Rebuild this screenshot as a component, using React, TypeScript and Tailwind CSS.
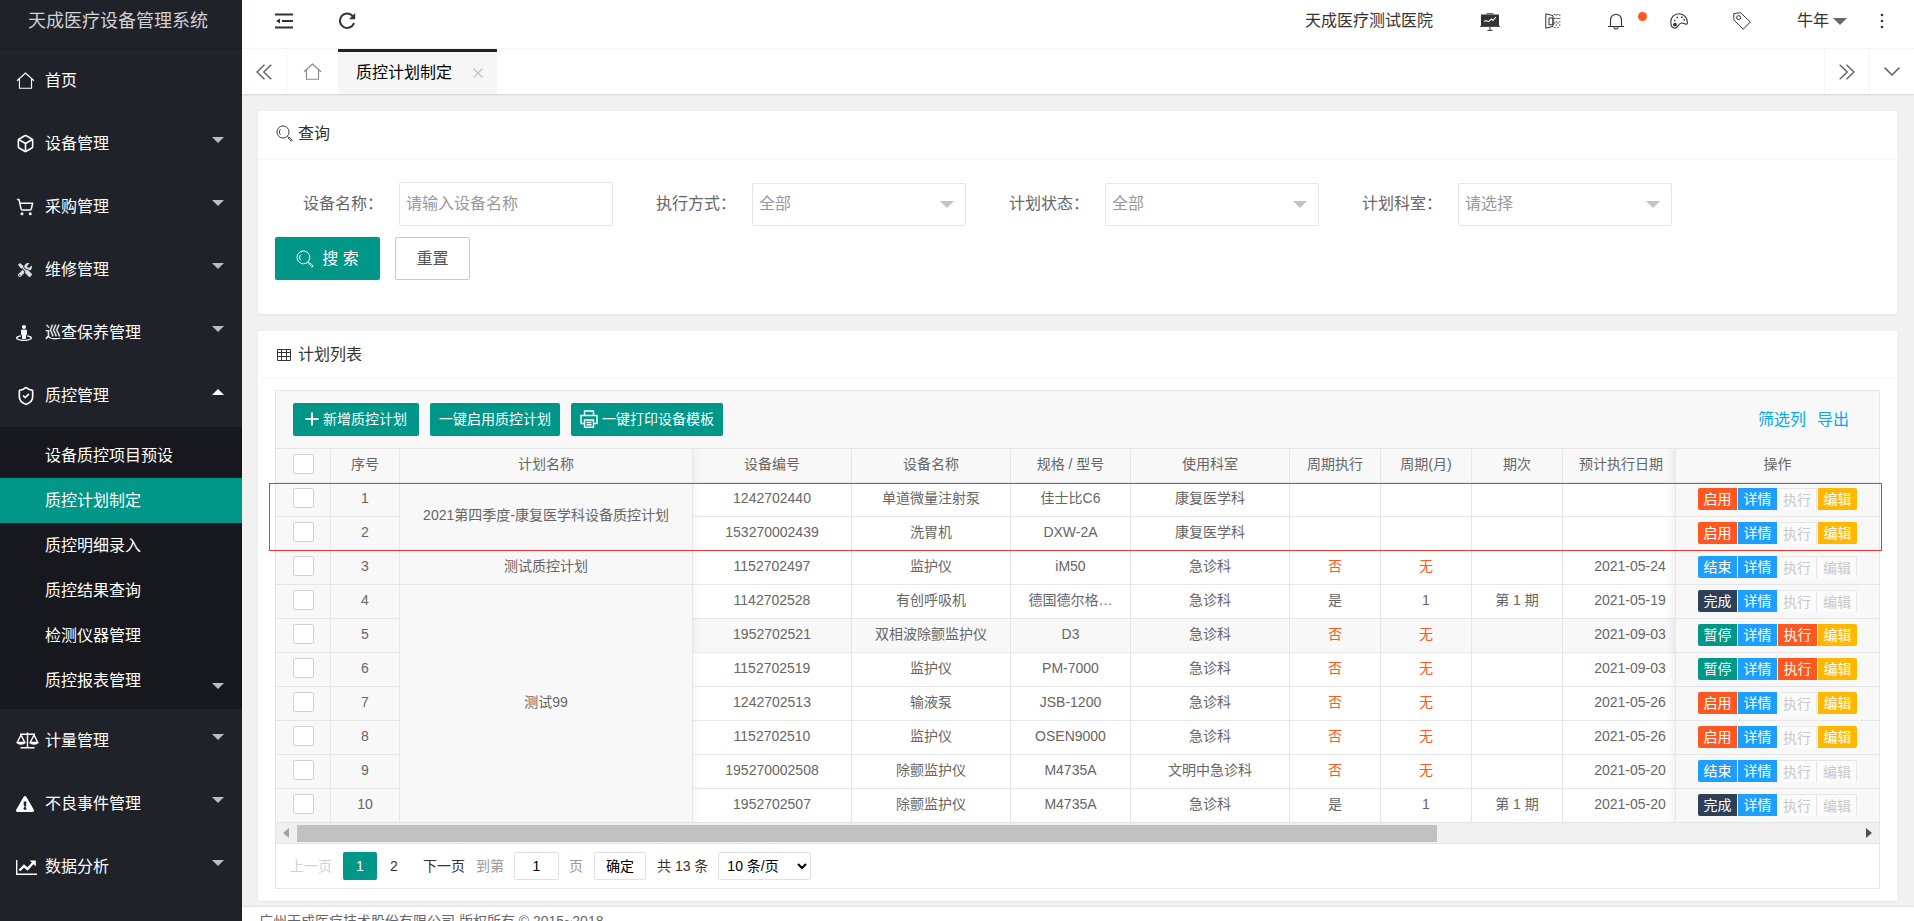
import { useState, type ReactNode } from 'react'
import { Box, ShieldCheck, ShoppingCart } from 'lucide-react'
import { FaExclamationTriangle, FaStreetView, FaTools } from 'react-icons/fa'

interface MenuItem {
  title: string
  icon: ReactNode
  children?: string[]
  leaf?: boolean
}

interface PlanRow {
  plan?: string
  span?: number
  code: string
  device: string
  model: string
  dept: string
  cycle: string
  months: string
  period: string
  date: string
  state: '启用' | '结束' | '完成' | '暂停'
}

const rows: PlanRow[] = [
  { plan: '2021第四季度-康复医学科设备质控计划', span: 2, code: '1242702440', device: '单道微量注射泵', model: '佳士比C6', dept: '康复医学科', cycle: '', months: '', period: '', date: '', state: '启用' },
  { code: '153270002439', device: '洗胃机', model: 'DXW-2A', dept: '康复医学科', cycle: '', months: '', period: '', date: '', state: '启用' },
  { plan: '测试质控计划', span: 1, code: '1152702497', device: '监护仪', model: 'iM50', dept: '急诊科', cycle: '否', months: '无', period: '', date: '2021-05-24', state: '结束' },
  { plan: '测试99', span: 7, code: '1142702528', device: '有创呼吸机', model: '德国德尔格…', dept: '急诊科', cycle: '是', months: '1', period: '第 1 期', date: '2021-05-19', state: '完成' },
  { code: '1952702521', device: '双相波除颤监护仪', model: 'D3', dept: '急诊科', cycle: '否', months: '无', period: '', date: '2021-09-03', state: '暂停' },
  { code: '1152702519', device: '监护仪', model: 'PM-7000', dept: '急诊科', cycle: '否', months: '无', period: '', date: '2021-09-03', state: '暂停' },
  { code: '1242702513', device: '输液泵', model: 'JSB-1200', dept: '急诊科', cycle: '否', months: '无', period: '', date: '2021-05-26', state: '启用' },
  { code: '1152702510', device: '监护仪', model: 'OSEN9000', dept: '急诊科', cycle: '否', months: '无', period: '', date: '2021-05-26', state: '启用' },
  { code: '195270002508', device: '除颤监护仪', model: 'M4735A', dept: '文明中急诊科', cycle: '否', months: '无', period: '', date: '2021-05-20', state: '结束' },
  { code: '1952702507', device: '除颤监护仪', model: 'M4735A', dept: '急诊科', cycle: '是', months: '1', period: '第 1 期', date: '2021-05-20', state: '完成' },
]

const HOVER_ROW = 4

const stateColors = {
  启用: 'bg-[#ff5722]',
  结束: 'bg-[#1e9fff]',
  完成: 'bg-[#2f4056]',
  暂停: 'bg-[#009688]',
}

const HomeIcon = ({ className = '' }: { className?: string }) => (
  <svg viewBox="0 0 20 18" className={className} fill="none" stroke="currentColor" strokeWidth="1.2">
    <path d="M1 9.3 10 1.2l9 8.1M3.6 7.2v10h12.8v-10" />
  </svg>
)

const SearchIcon = ({ className = '' }: { className?: string }) => (
  <svg viewBox="0 0 18 18" className={className} fill="none" stroke="currentColor" strokeWidth="1">
    <circle cx="7.4" cy="7.4" r="6.4" />
    <path d="M4.6 10.2c-1.3-1.6-1.3-4 0-5.6" />
    <path d="m12 12 1.4 1.2m-.6.6 1-1 3.4 3.2-1 1.1z" />
  </svg>
)

const ScaleIcon = () => (
  <svg viewBox="0 0 23 17" className="w-[23px] h-[17px]" fill="none" stroke="currentColor" strokeWidth="1.4">
    <path d="M4 2.2h15M11.5.5v14.500M4.500 15.800h14" />
    <path d="M5 3 1.200 10.500h7.600zM18 3l-3.800 7.500h7.600z" />
    <path d="M.8 10.500c.6 3 7.800 3 8.400 0zM13.800 10.500c.6 3 7.800 3 8.400 0z" fill="currentColor" stroke="none" />
  </svg>
)

const ChartIcon = () => (
  <svg viewBox="0 0 21 16" className="w-[21px] h-4" fill="none" stroke="currentColor">
    <path d="M.7 1v14.200H21" strokeWidth="1.400" />
    <path d="m3.500 11.500 4.500-4.500 3.500 3 5.500-6" strokeWidth="2.400" />
    <path d="M13.800 1.500h6v6z" fill="currentColor" stroke="none" />
  </svg>
)

const Triangle = ({ className = '' }: { className?: string }) => (
  <svg viewBox="0 0 14 7" className={className} fill="currentColor">
    <path d="M0 0h14L7 7z" />
  </svg>
)

const menu: MenuItem[] = [
  { title: '首页', icon: <HomeIcon className="w-[19px] h-[17px]" />, leaf: true },
  { title: '设备管理', icon: <Box size={19} strokeWidth={2} /> },
  { title: '采购管理', icon: <ShoppingCart size={18} strokeWidth={2} /> },
  { title: '维修管理', icon: <FaTools size={14} className="ml-[2px] text-[#dddddf]" /> },
  { title: '巡查保养管理', icon: <FaStreetView size={16} /> },
  {
    title: '质控管理',
    icon: <ShieldCheck size={20} strokeWidth={2} />,
    children: ['设备质控项目预设', '质控计划制定', '质控明细录入', '质控结果查询', '检测仪器管理', '质控报表管理'],
  },
  { title: '计量管理', icon: <ScaleIcon /> },
  { title: '不良事件管理', icon: <FaExclamationTriangle size={18} /> },
  { title: '数据分析', icon: <ChartIcon /> },
]

function Sidebar() {
  const [active, setActive] = useState('质控计划制定')
  return (
    <aside className="w-[242px] shrink-0 bg-[#20222a] text-white overflow-hidden">
      <h1 className="h-[49px] pb-[6px] pr-[6px] flex items-center justify-center text-lg text-[#d2d3d4] border-b border-[#1b1d23] whitespace-nowrap">
        天成医疗设备管理系统
      </h1>
      <nav>
        {menu.map(item => (
          <div key={item.title}>
            <a href="#" className="h-[63px] pl-4 pr-[17px] flex items-center text-base">
              <span className="w-[29px] shrink-0 flex items-center">{item.icon}</span>
              <span className="flex-1">{item.title}</span>
              {!item.leaf && (
                <Triangle className={`w-[14px] h-[6px] mb-2 ${item.children ? 'rotate-180 text-white' : 'text-[#bcbdbf]'}`} />
              )}
            </a>
            {item.children && (
              <div className="py-[6px] bg-[#17181d]">
                {item.children.map((child, i) => (
                  <a
                    key={child}
                    href="#"
                    onClick={() => setActive(child)}
                    className={`h-[45px] pl-[45px] pr-[17px] flex items-center text-base ${child === active ? 'bg-[#009688]' : ''}`}
                  >
                    <span className="flex-1">{child}</span>
                    {i === 5 && <Triangle className="w-[14px] h-[6px] mt-[10px] text-[#bcbdbf]" />}
                  </a>
                ))}
              </div>
            )}
          </div>
        ))}
      </nav>
    </aside>
  )
}

function TopBar() {
  return (
    <header className="h-[49px] shrink-0 pb-[6px] flex items-center bg-white border-b border-[#f6f6f6] text-[#333]">
      <button type="button" aria-label="收起菜单" className="ml-[33px]">
        <svg viewBox="0 0 18 16" className="w-[18px] h-4" fill="none" stroke="currentColor" strokeWidth="2">
          <path d="M0 1.5h18M7 8h11M0 14.5h18" />
          <path d="M5 5.5v5L1 8z" fill="currentColor" stroke="none" />
        </svg>
      </button>
      <button type="button" aria-label="刷新" className="ml-[45px]">
        <svg viewBox="0 0 18 18" className="w-[18px] h-[18px]" fill="none" stroke="currentColor" strokeWidth="2">
          <path d="M15.6 5.5A7.2 7.2 0 1 0 16 11" />
          <path d="M17.2 1v6.2H11z" fill="currentColor" stroke="none" />
        </svg>
      </button>
      <div className="flex-1" />
      <span className="text-base pr-[26px] whitespace-nowrap">天成医疗测试医院</span>
      <button type="button" aria-label="大屏" className="w-[63px] flex justify-center">
        <svg viewBox="0 0 20 18" className="w-5 h-[18px] mt-[2px]" fill="none">
          <path d="M6.5.8h7" stroke="#333" />
          <path d="M1 1.5h18v11.8H1z" fill="#333" />
          <path d="M0 13.3h20M10 13.3v4M7.5 17.4h5" stroke="#333" />
          <path d="m4 8.500 2-1 2.500 1.200 3-2.700 1.500 1.500 3-3.500" stroke="#fff" strokeWidth="1.1" />
        </svg>
      </button>
      <button type="button" aria-label="便签" className="w-[63px] flex justify-center">
        <svg viewBox="0 0 16 16" className="w-4 h-4" fill="none" stroke="currentColor" strokeWidth="1">
          <path d="M.8.8 8 2.6v10.8L.8 15.2zM4 5h4v6.5L4 12z" />
          <path d="M9 1.500h6M9 5.500h6M9 10h6M9 14.500h6M11.200 1.500v13M14.800 1.500v13" strokeDasharray="1.300 2" />
        </svg>
      </button>
      <button type="button" aria-label="消息" className="w-[63px] flex justify-center relative">
        <svg viewBox="0 0 16 17" className="w-4 h-[17px]" fill="none" stroke="currentColor" strokeWidth="1.1">
          <path d="M0 13.5h16M2.5 13.5V7a5.5 5.8 0 0 1 11 0v6.500M5.800 13.800c.4 3 4 3 4.400 0" />
        </svg>
        <span className="absolute right-px -top-[1px] w-[9px] h-[9px] rounded-full bg-[#ff5722]" />
      </button>
      <button type="button" aria-label="主题" className="w-[63px] flex justify-center">
        <svg viewBox="0 0 18 16" className="w-[18px] h-4" fill="none" stroke="currentColor" strokeWidth="1.1">
          <path d="M17.300 10.500C18 5 14 .8 9 .8S.8 4.500.8 9c0 4 2 6.200 4.200 6.200 3 0 3-4.700 6.500-5.200 2.500-.4 5 2.500 5.800.5z" />
          <circle cx="5" cy="11.600" r="1.300" fill="currentColor" />
          <path d="M4 7.500h1.500M6.500 4.500H8M11 4.300h1.500M13.500 7h1.500" strokeWidth="1.600" />
        </svg>
      </button>
      <button type="button" aria-label="标签" className="w-[63px] flex justify-center">
        <svg viewBox="0 0 18 18" className="w-[18px] h-[18px]" fill="none" stroke="currentColor" strokeWidth="1">
          <path d="M.8 1.600 7.500.7 17.300 10l-7.200 7.300L.8 7.800z" />
          <circle cx="5.600" cy="5.600" r="2" />
        </svg>
      </button>
      <button type="button" className="pl-[23px] pr-[3px] flex items-center gap-1 text-base whitespace-nowrap">
        牛年
        <Triangle className="w-[14px] h-[7px] text-[#666]" />
      </button>
      <button type="button" aria-label="更多" className="w-16 flex justify-center">
        <svg viewBox="0 0 4 16" className="w-1 h-4" fill="currentColor">
          <circle cx="2" cy="2" r="1.300" />
          <circle cx="2" cy="8" r="1.300" />
          <circle cx="2" cy="14" r="1.300" />
        </svg>
      </button>
    </header>
  )
}

function TabBar() {
  return (
    <div className="h-[45px] shrink-0 flex bg-white text-[#666] shadow-[0_1px_2px_rgba(0,0,0,0.12)] relative">
      <button type="button" aria-label="向左" className="w-[45px] flex items-center justify-center border-r border-[#f6f6f6]">
        <svg viewBox="0 0 16 16" className="w-4 h-4" fill="none" stroke="currentColor" strokeWidth="1.500">
          <path d="M8.500.8 1 8l7.500 7.200M15.300.8 7.800 8l7.500 7.200" />
        </svg>
      </button>
      <button type="button" aria-label="主页" className="w-[51px] flex items-center justify-center">
        <HomeIcon className="w-[19px] h-[17px] text-[#888]" />
      </button>
      <div className="w-[159px] pl-[18px] pr-[14px] flex items-center justify-between bg-[#f6f6f6] border-t-3 border-[#20222a] text-black text-base">
        <span>质控计划制定</span>
        <button type="button" aria-label="关闭" className="text-[#c2c2c2]">
          <svg viewBox="0 0 10 10" className="w-[10px] h-[10px]" fill="none" stroke="currentColor" strokeWidth="1.200">
            <path d="m.5.5 9 9m0-9-9 9" />
          </svg>
        </button>
      </div>
      <div className="flex-1" />
      <button type="button" aria-label="向右" className="w-[45px] flex items-center justify-center border-l border-[#f6f6f6]">
        <svg viewBox="0 0 16 16" className="w-4 h-4" fill="none" stroke="currentColor" strokeWidth="1.500">
          <path d="M.7.8 8.200 8 .7 15.200M7.500.8 15 8l-7.500 7.200" />
        </svg>
      </button>
      <button type="button" aria-label="页面操作" className="w-[45px] flex items-center justify-center border-l border-[#f6f6f6]">
        <svg viewBox="0 0 16 9" className="w-4 h-[9px]" fill="none" stroke="currentColor" strokeWidth="1.500">
          <path d="m.6.6 7.400 7.400L15.400.6" />
        </svg>
      </button>
    </div>
  )
}

function FilterSelect({ id, label, value }: { id: string; label: string; value: string }) {
  return (
    <div className="flex items-center">
      <label htmlFor={id} className="w-[125px] pr-4 text-right">{label}：</label>
      <div className="relative">
        <select id={id} className="w-[214px] h-[43px] pl-[6px] appearance-none bg-white border border-[#e6e6e6] rounded-xs text-[#999]">
          <option>{value}</option>
        </select>
        <Triangle className="absolute right-3 top-[18px] w-[14px] h-[7px] text-[#c2c2c2] pointer-events-none" />
      </div>
    </div>
  )
}

function QueryCard() {
  return (
    <section className="bg-white rounded-xs shadow-[0_1px_2px_rgba(0,0,0,0.05)]">
      <h2 className="h-[49px] pl-[18px] pb-[2px] flex items-center gap-[5px] text-base text-[#333] border-b border-[#f6f6f6]">
        <SearchIcon className="w-[17px] h-[17px] mb-[2px]" />
        查询
      </h2>
      <form className="pt-[22px] px-[17px] pb-[34px] text-base text-[#666]" onSubmit={e => e.preventDefault()}>
        <div className="flex flex-wrap gap-x-[14px] gap-y-3">
          <div className="flex items-center">
            <label htmlFor="device-name" className="w-[124px] pr-4 text-right">设备名称：</label>
            <input
              id="device-name"
              placeholder="请输入设备名称"
              className="w-[214px] h-11 pl-[6px] border border-[#e6e6e6] rounded-xs placeholder:text-[#999]"
            />
          </div>
          <FilterSelect id="mode" label="执行方式" value="全部" />
          <FilterSelect id="state" label="计划状态" value="全部" />
          <FilterSelect id="dept" label="计划科室" value="请选择" />
        </div>
        <div className="mt-[11px] flex gap-[15px]">
          <button type="submit" className="w-[105px] h-[43px] flex items-center justify-center gap-2 rounded-xs bg-[#009688] text-white">
            <SearchIcon className="w-[18px] h-[18px]" />
            搜 索
          </button>
          <button type="reset" className="w-[75px] h-[43px] rounded-xs border border-[#c9c9c9] text-[#555]">
            重置
          </button>
        </div>
      </form>
    </section>
  )
}

const headers = ['设备编号', '设备名称', '规格 / 型号', '使用科室', '周期执行', '周期(月)', '期次']

const cell = 'h-[34px] p-0 pb-1 font-normal text-center border-r border-b border-[#e6e6e6] whitespace-nowrap overflow-hidden'
const leftShadow = 'shadow-[inset_8px_0_8px_-8px_rgba(0,0,0,0.08)]'
const rightShadow = 'shadow-[inset_-10px_0_8px_-8px_rgba(0,0,0,0.08)]'

function Check({ label }: { label: string }) {
  return (
    <input
      type="checkbox"
      aria-label={label}
      className="block mx-auto w-[21px] h-5 appearance-none bg-white border border-[#d2d2d2] rounded-xs checked:bg-[#009688]"
    />
  )
}

function Operations({ state }: { state: PlanRow['state'] }) {
  const base = 'w-[39px] h-[22px] text-sm leading-[22px]'
  const off = 'bg-[#fbfbfb] text-[#c9c9c9] border-t border-[#e6e6e6]'
  const canRun = state === '暂停'
  const canEdit = state === '启用' || state === '暂停'
  return (
    <div className="flex justify-center gap-px">
      <button type="button" className={`${base} rounded-l-xs text-white ${stateColors[state]}`}>{state}</button>
      <button type="button" className={`${base} bg-[#1e9fff] text-white`}>详情</button>
      <button type="button" disabled={!canRun} className={`${base} ${canRun ? 'bg-[#ff5722] text-white' : `${off} border-r`}`}>执行</button>
      <button type="button" disabled={!canEdit} className={`${base} rounded-r-xs ${canEdit ? 'bg-[#ffb800] text-white' : `${off} border-r`}`}>编辑</button>
    </div>
  )
}

function PlanTable() {
  return (
    <div className="relative">
      <table className="w-full table-fixed border-separate border-spacing-0 text-sm text-[#666]">
        <colgroup>
          <col className="w-[55px]" />
          <col className="w-[69px]" />
          <col />
          <col className="w-[159px]" />
          <col className="w-[159px]" />
          <col className="w-[120px]" />
          <col className="w-[159px]" />
          <col className="w-[91px]" />
          <col className="w-[91px]" />
          <col className="w-[91px]" />
          <col className="w-[113px]" />
          <col className="w-[203px]" />
        </colgroup>
        <thead className="bg-[#f8f8f8]">
          <tr>
            <th className={cell}><Check label="全选" /></th>
            <th className={cell}>序号</th>
            <th className={cell}>计划名称</th>
            {headers.map((h, i) => (
              <th key={h} className={`${cell} ${i === 0 ? leftShadow : ''}`}>{h}</th>
            ))}
            <th className={`${cell} pl-1 ${rightShadow}`}>预计执行日期</th>
            <th className={`${cell} border-r-0`}>操作</th>
          </tr>
        </thead>
        <tbody>
          {rows.map((row, i) => (
            <tr key={row.code} className={i === HOVER_ROW ? 'bg-[#f8f8f8]' : 'bg-white'}>
              <td className={`${cell} bg-[#f8f8f8]`}><Check label={`选择第 ${i + 1} 行`} /></td>
              <td className={`${cell} bg-[#f8f8f8]`}>{i + 1}</td>
              {row.plan && <td rowSpan={row.span} className={`${cell} bg-[#f8f8f8]`}>{row.plan}</td>}
              <td className={`${cell} ${leftShadow}`}>{row.code}</td>
              <td className={cell}>{row.device}</td>
              <td className={cell}>{row.model}</td>
              <td className={cell}>{row.dept}</td>
              <td className={`${cell} ${row.cycle === '否' ? 'text-[#ff5722]' : ''}`}>{row.cycle}</td>
              <td className={`${cell} ${row.months === '无' ? 'text-[#ff5722]' : ''}`}>{row.months}</td>
              <td className={cell}>{row.period}</td>
              <td className={`${cell} pl-[22px] ${rightShadow}`}>{row.date}</td>
              <td className="h-[34px] p-0 pb-px border-b border-[#e6e6e6] bg-[#f8f8f8]"><Operations state={row.state} /></td>
            </tr>
          ))}
        </tbody>
      </table>
      {/* highlighted plan */}
      <div className="absolute -left-[7px] -right-[3px] top-[34px] h-[68px] border border-[#f5352f] pointer-events-none" />
    </div>
  )
}

function ScrollTrack() {
  return (
    <div className="h-[21px] px-[7px] flex items-center justify-between bg-[#f0f0f0] border-b border-[#e6e6e6]">
      <svg viewBox="0 0 6 10" className="w-[6px] h-[10px] text-[#a3a3a3]" fill="currentColor"><path d="M6 0v10L0 5z" /></svg>
      <div className="flex-1 px-2">
        <div className="w-[73%] h-[17px] bg-[#c1c1c1]" />
      </div>
      <svg viewBox="0 0 6 10" className="w-[6px] h-[10px] text-[#505050]" fill="currentColor"><path d="M0 0v10l6-5z" /></svg>
    </div>
  )
}

function Pager() {
  const box = 'h-7 border border-[#e2e2e2] rounded-xs bg-white text-black'
  return (
    <div className="h-11 pl-[14px] flex items-center text-sm text-[#333] whitespace-nowrap">
      <button type="button" disabled className="text-[#d2d2d2]">上一页</button>
      <button type="button" className="ml-[11px] w-[34px] h-7 rounded-xs bg-[#009688] text-white">1</button>
      <button type="button" className="w-[34px] h-7">2</button>
      <button type="button" className="ml-3">下一页</button>
      <label htmlFor="page-no" className="ml-[11px] text-[#999]">到第</label>
      <input id="page-no" defaultValue="1" className={`${box} ml-[10px] w-[45px] text-center`} />
      <span className="ml-[10px] text-[#999]">页</span>
      <button type="button" className={`${box} ml-[11px] w-[52px]`}>确定</button>
      <span className="ml-[11px]">共 13 条</span>
      <select aria-label="每页条数" className={`${box} ml-[10px] w-[93px] pl-1`}>
        <option>10 条/页</option>
      </select>
    </div>
  )
}

function PlanCard() {
  const btn = 'h-[33px] pb-px flex items-center gap-1 rounded-xs bg-[#009688] text-white text-sm'
  return (
    <section className="bg-white rounded-xs shadow-[0_1px_2px_rgba(0,0,0,0.05)]">
      <h2 className="h-12 pl-[19px] flex items-center gap-[7px] text-base text-[#333] border-b border-[#f6f6f6]">
        <svg viewBox="0 0 14 12" className="w-[14px] h-3" fill="none" stroke="currentColor" strokeWidth="1">
          <path d="M.5.5h13v11H.5zM.5 3.500h13M.5 7.500h13M4.500 1v10.500M9.500 1v10.500" />
        </svg>
        计划列表
      </h2>
      <div className="pt-[11px] px-[17px] pb-3">
        <div className="border border-[#e6e6e6]">
          <div className="h-[58px] pl-[17px] pr-[30px] flex items-center gap-[11px] bg-[#f8f8f8] border-b border-[#e6e6e6]">
            <button type="button" className={`${btn} px-3`}>
              <svg viewBox="0 0 14 14" className="w-[14px] h-[14px]" stroke="currentColor" strokeWidth="2"><path d="M7 .5v13M.5 7h13" /></svg>
              新增质控计划
            </button>
            <button type="button" className={`${btn} px-[9px]`}>一键启用质控计划</button>
            <button type="button" className={`${btn} px-[9px]`}>
              <svg viewBox="0 0 18 18" className="w-[18px] h-[18px]" fill="none" stroke="currentColor" strokeWidth="1.400">
                <path d="M4.500 5.500V1h9v4.500M4.500 13.500H1V5.500h16v8h-3.500" />
                <path d="M4.500 10h9v7.200h-9zM6.500 12.500h5M6.500 14.800h5" />
              </svg>
              一键打印设备模板
            </button>
            <div className="ml-auto flex gap-[11px] text-base text-[#01aaed]">
              <a href="#">筛选列</a>
              <a href="#">导出</a>
            </div>
          </div>
          <PlanTable />
          <ScrollTrack />
          <Pager />
        </div>
      </div>
    </section>
  )
}

export default function App() {
  return (
    <div className="h-screen flex overflow-hidden bg-[#f1f1f1] font-['Liberation_Sans','Noto_Sans_CJK_SC',sans-serif]">
      <Sidebar />
      <div className="flex-1 min-w-0 flex flex-col overflow-hidden">
        <TopBar />
        <TabBar />
        <main className="shrink-0 px-4 pt-[17px] pr-[17px] pb-[6px] flex flex-col gap-[17px]">
          <QueryCard />
          <PlanCard />
        </main>
        <footer className="h-7 shrink-0 px-[17px] bg-white text-sm leading-7 text-[#666] shadow-[0_-1px_2px_rgba(0,0,0,0.08)]">
          广州天成医疗技术股份有限公司 版权所有 © 2015~2018
        </footer>
      </div>
    </div>
  )
}
